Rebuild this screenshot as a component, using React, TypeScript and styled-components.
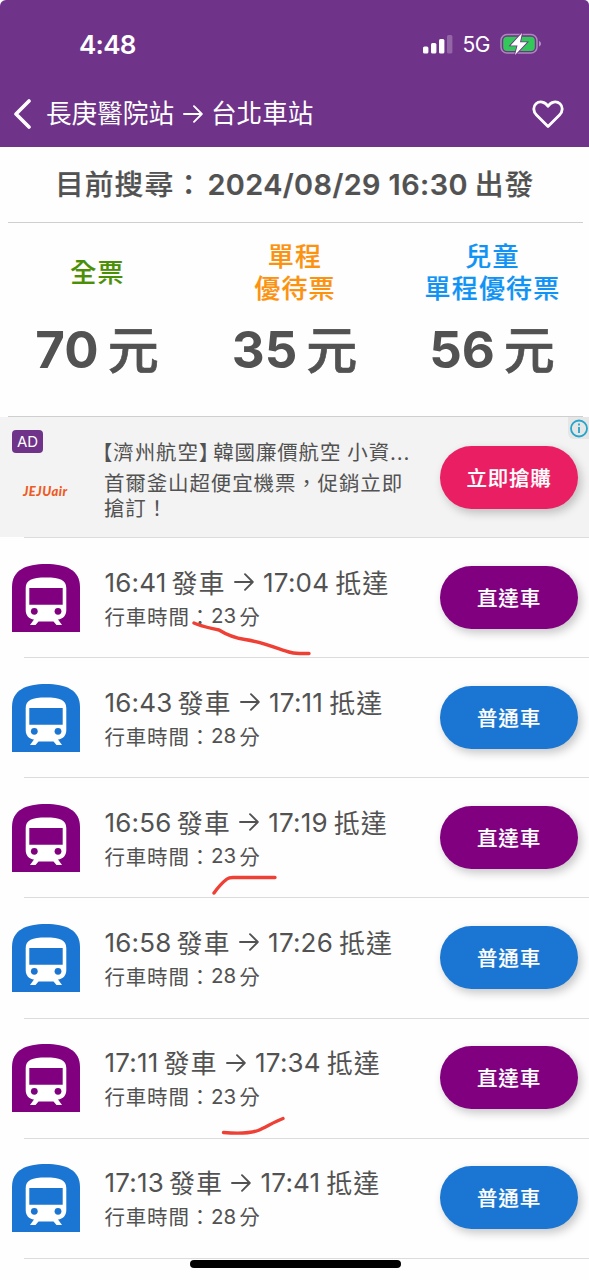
import React from "react";
import styled, { createGlobalStyle } from "styled-components";

const GlobalStyle = createGlobalStyle`
  * { box-sizing: border-box; }
  body {
    margin: 0;
    background: #fff;
    color: #525252;
    font-family: Inter, "Noto Sans CJK TC", sans-serif;
  }
`;

const Screen = styled.div`
  position: relative;
  width: 589px;
  height: 1280px;
  overflow: hidden;
  background: #fefefe;
`;

const Header = styled.header`
  height: 147px;
  background: #6f3389;
  color: #fff;
  border-radius: 6px 5px 0 0;
`;

const StatusBar = styled.div`
  display: flex;
  align-items: center;
  height: 88px;
  padding: 0 47px 0 79px;
`;

const Clock = styled.span`
  font-size: 26px;
  font-weight: 600;
  letter-spacing: -0.7px;
  margin-right: auto;
`;

const Network = styled.span`
  font-size: 21px;
  letter-spacing: -0.5px;
  margin: 1px 10px 0 10px;
`;

const NavBar = styled.div`
  display: flex;
  align-items: center;
  height: 52px;
  padding: 0 25px 0 13px;
`;

const NavTitle = styled.h1`
  display: flex;
  align-items: center;
  flex: 1;
  margin: 0 0 0 13px;
  font-size: 25.6px;
  font-weight: 400;
  line-height: 40px;
`;

const Run = styled.span<{ $gap?: number; $track?: number; $lift?: number; $weight?: number; $stroke?: number }>`
  white-space: pre;
  margin-left: ${(p) => p.$gap ?? 0}px;
  margin-bottom: ${(p) => (p.$lift ?? 0) * 2}px;
  letter-spacing: ${(p) => p.$track ?? 0}px;
  ${(p) => p.$weight && `font-weight: ${p.$weight};`}
  ${(p) => p.$stroke && `-webkit-text-stroke: ${p.$stroke}px currentColor;`}
`;

const SearchInfo = styled.div`
  display: flex;
  align-items: center;
  height: 76px;
  margin: 0 6px 0 8px;
  padding-left: 47px;
  border-bottom: 1.5px solid #cfcfcf;
  font-size: 28.8px;
  font-weight: 600;
  white-space: pre;
`;

const Fares = styled.section`
  display: grid;
  grid-template-columns: 194px 201px 194px;
  height: 194px;
  position: relative;
`;

const FareRule = styled.div`
  height: 1px;
  margin: -1px 6px 0 8px;
  position: relative;
  background: #cfcfcf;
`;

const Fare = styled.div`
  display: flex;
  flex-direction: column;
  align-items: center;
  padding-top: 18px;
`;

const FareLabel = styled.div<{ $color: string }>`
  display: flex;
  align-items: center;
  height: 64px;
  padding-left: 1px;
  color: ${(p) => p.$color};
  font-size: 26px;
  font-weight: 500;
  line-height: 32px;
  letter-spacing: 1.2px;
  text-align: center;
  white-space: pre-line;
  -webkit-text-stroke: 0.2px currentColor;
`;

const Price = styled.div`
  display: flex;
  align-items: center;
  height: 60px;
  margin-top: 14.5px;
  font-size: 51px;
  font-weight: 650;
`;

const Ad = styled.section`
  position: relative;
  display: flex;
  height: 120px;
  background: #f3f3f3;
`;

const AdSide = styled.div`
  width: 104px;
  padding: 13px 0 0 12px;
`;

const AdBadge = styled.div`
  width: 31px;
  height: 23px;
  border-radius: 4px;
  background: #6f3389;
  color: #fff;
  font-size: 15px;
  line-height: 24px;
  text-align: center;
`;

const AdLogo = styled.div`
  margin: 28px 0 0 11px;
  color: #ee5a24;
  font: italic 900 13px/20px Lato, sans-serif;
  letter-spacing: 0.5px;
  white-space: nowrap;
`;

const AdText = styled.div`
  width: 336px;
  padding-top: 22px;
  font-size: 20.5px;
  letter-spacing: 0.86px;
  white-space: pre;
`;

const AdTitle = styled.div`
  display: flex;
  height: 31.5px;
  line-height: 27px;
`;

const AdBody = styled.div`
  line-height: 25.5px;
`;

const AdInfo = styled.div`
  position: absolute;
  top: 0;
  right: 0;
  width: 21px;
  height: 22px;
  border-radius: 0 0 0 6px;
  background: #e6e6e6;
`;

const Pill = styled.button<{ $color: string }>`
  width: 138px;
  height: 63px;
  border: 0;
  border-radius: 32px;
  background: ${(p) => p.$color};
  box-shadow: 3px 4px 10px rgba(0, 0, 0, 0.22);
  color: #fff;
  font: 500 20.5px/63px Inter, "Noto Sans CJK TC", sans-serif;
  letter-spacing: 0.8px;
  padding: 1px 0 0;
  -webkit-text-stroke: 0.15px currentColor;
`;

const AdAction = styled.div`
  padding-top: 29px;
`;

const Train = styled.article`
  position: relative;
  display: flex;
  height: 120.15px;
  padding: 0 11px 0 12px;
`;

const Rule = styled.div`
  position: absolute;
  top: 0;
  left: 24px;
  right: 0;
  height: 1px;
  background: #dcdcdc;
`;

const TrainIcon = styled.svg`
  width: 68px;
  height: 68px;
  margin-top: 26.6px;
`;

const Details = styled.div`
  flex: 1;
  margin-left: 24.5px;
  padding-top: 26px;
`;

const Times = styled.div`
  display: flex;
  align-items: center;
  height: 38px;
  font-size: 26px;
`;

const Duration = styled.div`
  display: flex;
  align-items: center;
  height: 29px;
  font-size: 20.5px;
`;

const TrainAction = styled.div`
  padding-top: 28.7px;
`;

const Mark = styled.svg<{ $x: number; $y: number }>`
  position: absolute;
  left: ${(p) => p.$x}px;
  top: ${(p) => p.$y}px;
  overflow: visible;
  z-index: 2;
`;

const HomeBar = styled.div`
  position: absolute;
  left: 190px;
  top: 1260px;
  width: 211px;
  height: 8px;
  border-radius: 4px;
  background: #000;
`;

const ArrowSvg = styled.svg<{ $gap: number }>`
  margin-left: ${(p) => p.$gap}px;
  flex: none;
`;

function Arrow({ gap = 10, width = 20 }: { gap?: number; width?: number }) {
  return (
    <ArrowSvg $gap={gap} width={width} height="20" viewBox="0 0 20 20" fill="none" stroke="currentColor" strokeWidth="1.9" strokeLinecap="round" strokeLinejoin="round">
      <path d="M1 10H18.600M11 2.200L18.800 10L11 17.800" />
    </ArrowSvg>
  );
}

type Trip = { dep: string; arr: string; min: string; express: boolean; mark?: { x: number; y: number; d: string } };

const trips: Trip[] = [
  { dep: "16:41", arr: "17:04", min: "23", express: true, mark: { x: 193, y: 84, d: "M1 2C10 6 18 7 26 9C34 14 42 17 52 18.5C70 21 88 29 98 31.5C104 33 110 32.5 116 32.5" } },
  { dep: "16:43", arr: "17:11", min: "28", express: false },
  { dep: "16:56", arr: "17:19", min: "23", express: true, mark: { x: 213, y: 97, d: "M1 19C6 12 10 8 14 5Q16 3.5 20 3.5H62" } },
  { dep: "16:58", arr: "17:26", min: "28", express: false },
  { dep: "17:11", arr: "17:34", min: "23", express: true, mark: { x: 222, y: 97, d: "M1.5 17.5C14 18.5 26 19 36 15.5C44 12 52 7 61 3.5" } },
  { dep: "17:13", arr: "17:41", min: "28", express: false },
];

const PURPLE = "#800080";
const BLUE = "#1a76d2";

function TrainRow({ trip }: { trip: Trip }) {
  const color = trip.express ? PURPLE : BLUE;
  return (
    <Train>
      <Rule />
      <TrainIcon viewBox="0 0 68 68">
        <path fill={color} d="M0 68V23C0 6 14 0 34 0S68 6 68 23V68Z" />
        <path fill="#fff" d="M13.700 24C13.700 16 20 13.500 34 13.500S54.300 16 54.300 24V46C54.300 51.500 51 55 46 55.500L50 61H44.500L41.500 57.500H26.500L23.500 61H18L22 55.500C17 55 13.700 51.500 13.700 46Z" />
        <path fill={color} d="M17.300 24H50.700V40.700H17.300Z" />
        <circle cx="22.300" cy="47.300" r="3.400" fill={color} />
        <circle cx="46" cy="47.300" r="3.400" fill={color} />
      </TrainIcon>
      <Details>
        <Times>
          <Run $track={0.2}>{trip.dep}</Run>
          <Run $gap={5} $track={1} $lift={1}>發車</Run>
          <Arrow gap={8} />
          <Run $gap={9.5} $track={0.2}>{trip.arr}</Run>
          <Run $gap={6} $track={1} $lift={1}>抵達</Run>
        </Times>
        <Duration>
          <Run $track={0.8}>行車時間：</Run>
          <Run>{trip.min}</Run>
          <Run $gap={3}>分</Run>
        </Duration>
      </Details>
      <TrainAction>
        <Pill $color={color}>{trip.express ? "直達車" : "普通車"}</Pill>
      </TrainAction>
      {trip.mark && (
        <Mark $x={trip.mark.x} $y={trip.mark.y} width="120" height="36" fill="none" stroke="#ee4035" strokeWidth="3.4" strokeLinecap="round">
          <path d={trip.mark.d} />
        </Mark>
      )}
    </Train>
  );
}

const fares = [
  { label: "全票", price: "70", color: "#4b8f06" },
  { label: "單程\n優待票", price: "35", color: "#fb9210" },
  { label: "兒童\n單程優待票", price: "56", color: "#1093f5" },
];

export default function App() {
  return (
    <Screen>
      <GlobalStyle />
      <Header>
        <StatusBar>
          <Clock>4:48</Clock>
          <svg width="30" height="19" viewBox="0 0 30 19" fill="#fff">
            <rect x="0" y="11.500" width="5.400" height="7" rx="1.500" />
            <rect x="8" y="8" width="5.400" height="10.500" rx="1.500" />
            <rect x="16" y="4" width="5.400" height="14.500" rx="1.500" />
            <rect x="24" y="0" width="5.400" height="18.500" rx="1.500" opacity=".25" />
          </svg>
          <Network>5G</Network>
          <svg width="42" height="22" viewBox="0 0 42 22">
            <rect x="1" y="1.500" width="36" height="18.500" rx="6" fill="none" stroke="#fff" strokeOpacity=".42" strokeWidth="1.500" />
            <rect x="3.200" y="3.700" width="31.600" height="14.200" rx="4" fill="#34c759" />
            <path d="M39 8V13.500C41.800 12.500 41.800 9 39 8Z" fill="#fff" opacity=".45" />
            <path d="M22 0L10.500 12.500H17.500L15 22L27 9.300H20Z" fill="#fff" stroke="#6f3389" strokeWidth="1.700" paintOrder="stroke" />
          </svg>
        </StatusBar>
        <NavBar>
          <svg width="20" height="30" viewBox="0 0 20 30" fill="none" stroke="#fff" strokeWidth="3.600" strokeLinecap="round" strokeLinejoin="round">
            <path d="M16 2L3 15L16 28" />
          </svg>
          <NavTitle>
            <Run>長庚醫院站</Run>
            <Arrow gap={9} />
            <Run $gap={8}>台北車站</Run>
          </NavTitle>
          <svg width="32" height="29" viewBox="0 0 32 29" fill="none" stroke="#fff" strokeWidth="2.800" strokeLinejoin="round">
            <path d="M16 26.500L4.500 15C1 11.500 1 6.500 4 3.800C7.500 .7 13 1.500 16 6.300C19 1.500 24.500 .7 28 3.800C31 6.500 31 11.500 27.500 15Z" />
          </svg>
        </NavBar>
      </Header>
      <SearchInfo>
        <Run $track={1} $weight={500} $stroke={0.2} $lift={2}>目前搜尋：</Run>
        <Run $gap={3.5} $track={0.42} $stroke={0.2}>2024/08/29 16:30</Run>
        <Run $gap={7} $track={1} $weight={500} $stroke={0.2} $lift={2}>出發</Run>
      </SearchInfo>
      <Fares>
        {fares.map((f) => (
          <Fare key={f.price}>
            <FareLabel $color={f.color}>{f.label}</FareLabel>
            <Price>
              <Run>{f.price}</Run>
              <Run $gap={9} $weight={500} $stroke={0.7} $lift={2.5}>元</Run>
            </Price>
          </Fare>
        ))}
      </Fares>
      <FareRule />
      <Ad>
        <AdSide>
          <AdBadge>AD</AdBadge>
          <AdLogo>JEJUair</AdLogo>
        </AdSide>
        <AdText>
          <AdTitle>
            <Run $gap={-12} $track={0.86}>【濟州航空】</Run>
            <Run $gap={-7} $track={0.86}>韓國廉價航空</Run>
            <Run $gap={6} $track={0.86}>小資...</Run>
          </AdTitle>
          <AdBody>{"首爾釜山超便宜機票，促銷立即\n搶訂！"}</AdBody>
        </AdText>
        <AdAction>
          <Pill $color="#ea1e63">立即搶購</Pill>
        </AdAction>
        <AdInfo>
          <svg width="21" height="22" viewBox="0 0 21 22" fill="none" stroke="#25a5c9" strokeWidth="1.800">
            <circle cx="11" cy="11.500" r="8" />
            <path d="M11 10V16M11 6.500V8.500" />
          </svg>
        </AdInfo>
      </Ad>
      {trips.map((t) => (
        <TrainRow key={t.dep} trip={t} />
      ))}
      <Train>
        <Rule />
      </Train>
      <HomeBar />
    </Screen>
  );
}
